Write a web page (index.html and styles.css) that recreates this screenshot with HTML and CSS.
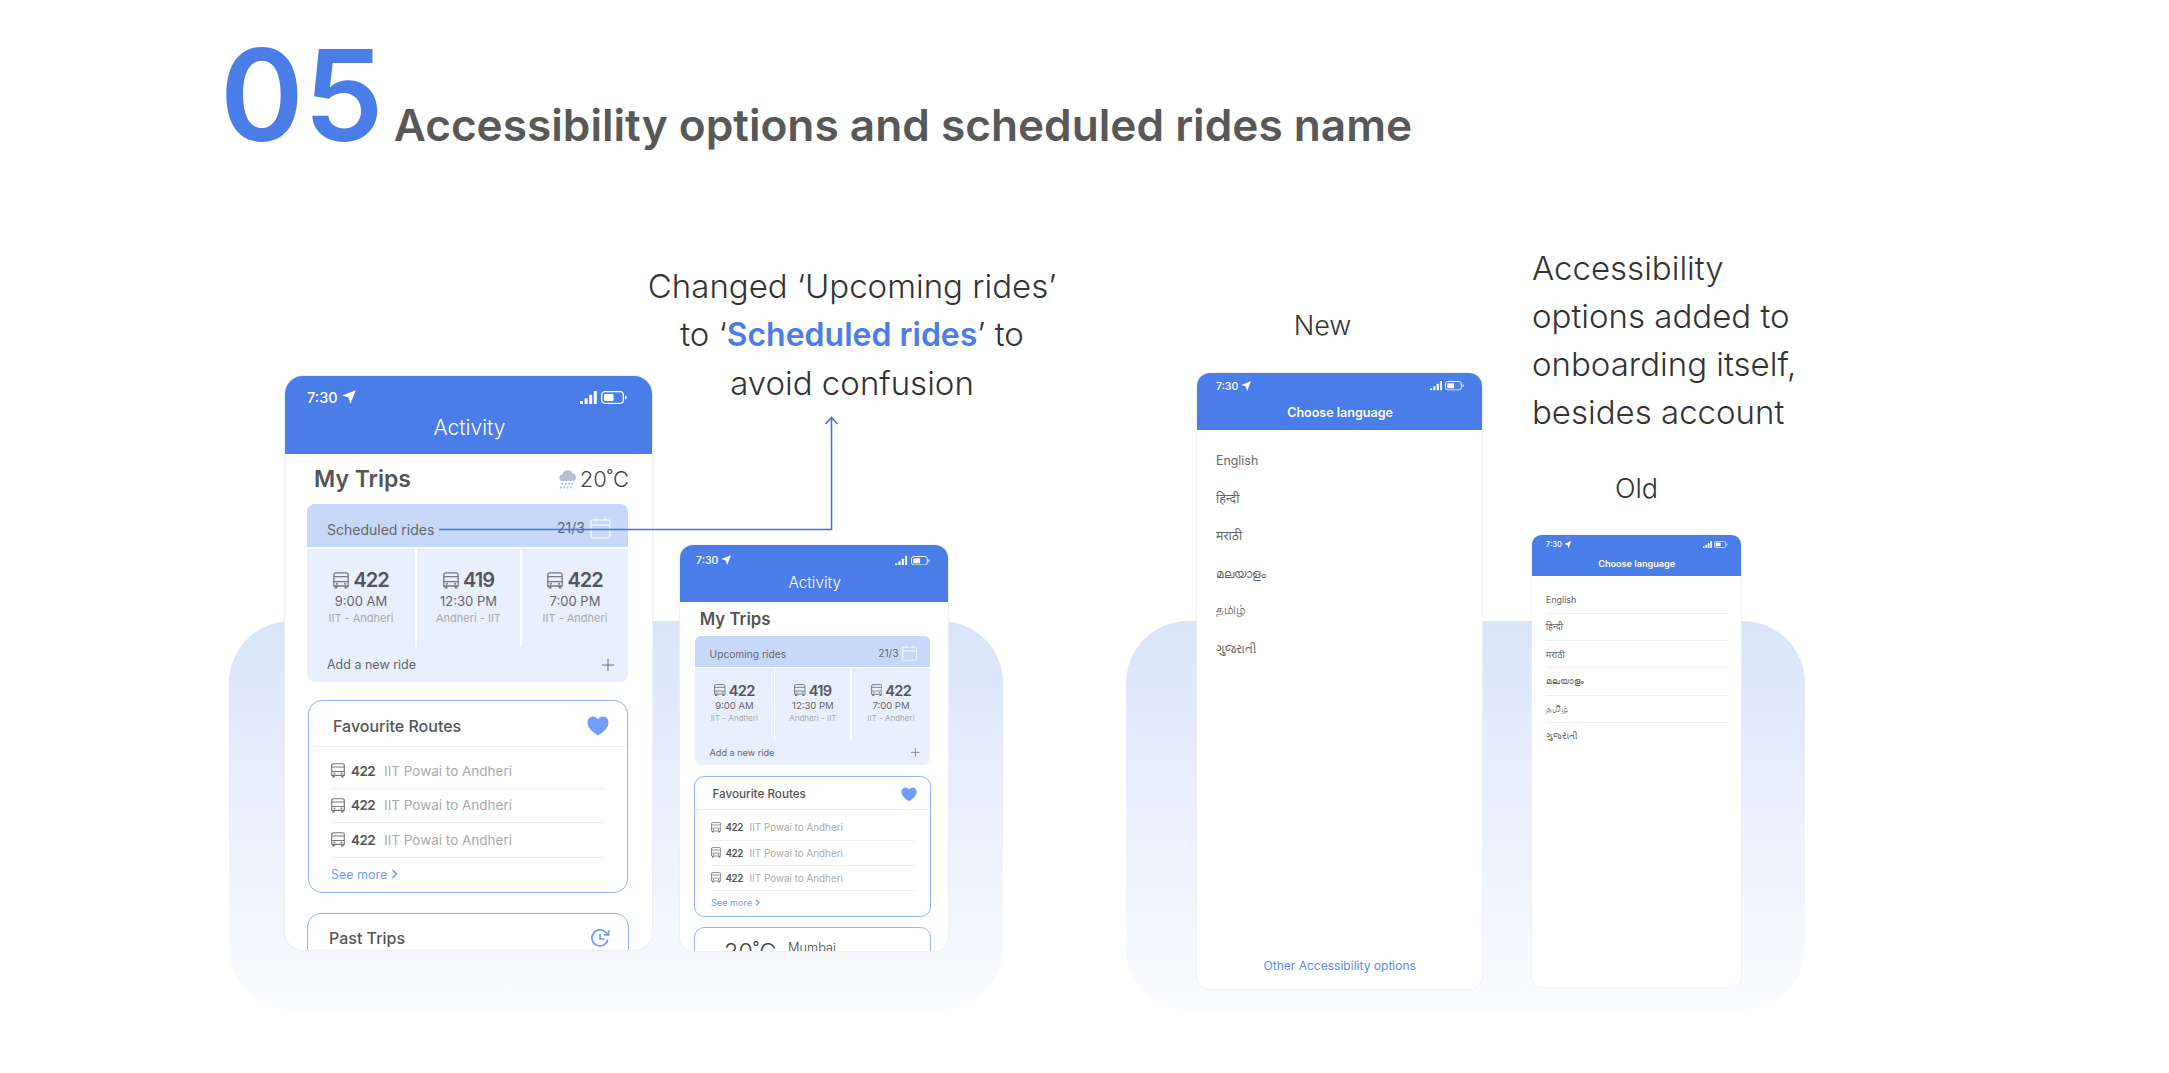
FILE: index.html
```html
<!DOCTYPE html>
<html lang="en">
<head>
    <meta charset="UTF-8">
    <meta name="viewport" content="width=device-width, initial-scale=1">
    <title>Accessibility options and scheduled rides name</title>
    <link rel="stylesheet" href="styles.css">
</head>
<body>
<svg class="iconDefs" width="0" height="0" aria-hidden="true">
    <symbol id="bus" viewBox="0 0 16 17">
        <path d="M2.8.8h10.4A2 2 0 0 1 15.2 2.8V14H.8V2.8A2 2 0 0 1 2.8.8Z" fill="none" stroke="currentColor" stroke-width="1.3"/>
        <path d="M.8 4.6h14.4M.8 9.6h14.4" fill="none" stroke="currentColor" stroke-width="1.2"/>
        <path d="M1.6 14h2.8v2.5H1.6zM11.6 14h2.8v2.5h-2.8z" fill="currentColor"/>
        <circle cx="4" cy="11.8" r="1" fill="currentColor"/>
        <circle cx="12" cy="11.8" r="1" fill="currentColor"/>
    </symbol>
    <symbol id="nav" viewBox="0 0 12 12">
        <path d="M11.8.2 7.2 11.8 5.6 6.4.2 4.8Z" fill="currentColor"/>
    </symbol>
    <symbol id="signal" viewBox="0 0 17 13">
        <rect x="0" y="10" width="3" height="3" rx=".6" fill="currentColor"/>
        <rect x="4.6" y="7.2" width="3" height="5.8" rx=".6" fill="currentColor"/>
        <rect x="9.2" y="3.8" width="3" height="9.2" rx=".6" fill="currentColor"/>
        <rect x="13.8" y="0" width="3" height="13" rx=".6" fill="currentColor"/>
    </symbol>
    <symbol id="battery" viewBox="0 0 26 13">
        <rect x=".7" y=".7" width="21.6" height="11.6" rx="3.2" fill="none" stroke="currentColor" stroke-width="1.3"/>
        <rect x="3" y="3" width="9.5" height="7" rx="1.2" fill="currentColor"/>
        <path d="M24 4.4c1.2.4 1.8 1.1 1.8 2.1S25.2 8.2 24 8.6Z" fill="currentColor"/>
    </symbol>
    <symbol id="heart" viewBox="0 0 22 20">
        <path d="M11 19.500C5 15.200.5 11.600.5 6.400.5 3 3 .6 6 .6c2 0 3.800 1 5 2.800C12.200 1.600 14 .6 16 .6c3 0 5.500 2.400 5.500 5.800 0 5.200-4.500 8.800-10.500 13.100Z" fill="currentColor"/>
    </symbol>
    <symbol id="calendar" viewBox="0 0 21 22">
        <rect x="1" y="3" width="19" height="18" rx="2" fill="none" stroke="currentColor" stroke-width="1.5"/>
        <path d="M1 8h19M6 .5v4M15 .5v4" fill="none" stroke="currentColor" stroke-width="1.5"/>
    </symbol>
    <symbol id="plus" viewBox="0 0 12 12">
        <path d="M6 0v12M0 6h12" fill="none" stroke="currentColor" stroke-width="1.1"/>
    </symbol>
    <symbol id="chevron" viewBox="0 0 7 10">
        <path d="M1.5 1 5.500 5l-4 4" fill="none" stroke="currentColor" stroke-width="1.6"/>
    </symbol>
    <symbol id="history" viewBox="0 0 20 20">
        <path d="M17.800 11.500A8 8 0 1 1 15.600 4.200L18 6.200" fill="none" stroke="currentColor" stroke-width="1.7"/>
        <path d="M18.800 2.200 18.400 7 13.800 6.600" fill="none" stroke="currentColor" stroke-width="1.7"/>
        <path d="M10 6v5h4.500" fill="none" stroke="currentColor" stroke-width="1.7"/>
    </symbol>
    <symbol id="rainCloud" viewBox="0 0 18 22">
        <path d="M4 13A3.200 3.200 0 0 1 3.300 6.600 5.500 5.500 0 0 1 13.600 5.400 3.900 3.900 0 0 1 14.400 13Z" fill="#b4c1d3"/>
        <path d="M3.600 14.800l-.7 2M7 14.800l-.7 2M10.400 14.800l-.7 2M13.800 14.800l-.7 2M2.200 18.600l-.7 2M5.600 18.600l-.7 2M9 18.600l-.7 2M12.400 18.600l-.7 2" fill="none" stroke="#7cc4f5" stroke-width="1.4"/>
    </symbol>
</svg>

<h1 class="pageTitle"><span class="titleNumber">05</span> Accessibility options and scheduled rides name</h1>

<div class="board">
    <div class="panel panelLeft"></div>
    <div class="panel panelRight"></div>

    <div class="column columnNew">
        <div class="phone phoneTrips">
            <div class="phoneHeader">
                <div class="statusBar">
                    <span class="clock">7:30 <svg class="navIcon"><use href="#nav"/></svg></span>
                    <span class="statusIcons"><svg class="signalIcon"><use href="#signal"/></svg><svg class="batteryIcon"><use href="#battery"/></svg></span>
                </div>
                <div class="headerTitle">Activity</div>
            </div>
            <div class="tripsRow">
                <span class="tripsTitle">My Trips</span>
                <span class="weather"><svg class="cloudIcon"><use href="#rainCloud"/></svg>20˚C</span>
            </div>
            <div class="ridesCard">
                <div class="ridesHead">
                    <span>Scheduled rides</span>
                    <span class="ridesDate">21/3 <svg class="calendarIcon"><use href="#calendar"/></svg></span>
                </div>
                <div class="ridesGrid">
                    <div class="ride">
                        <div class="rideNumber"><svg class="busIcon"><use href="#bus"/></svg>422</div>
                        <div class="rideTime">9:00 AM</div>
                        <div class="rideRoute">IIT - Andheri</div>
                    </div>
                    <div class="ride">
                        <div class="rideNumber"><svg class="busIcon"><use href="#bus"/></svg>419</div>
                        <div class="rideTime">12:30 PM</div>
                        <div class="rideRoute">Andheri - IIT</div>
                    </div>
                    <div class="ride">
                        <div class="rideNumber"><svg class="busIcon"><use href="#bus"/></svg>422</div>
                        <div class="rideTime">7:00 PM</div>
                        <div class="rideRoute">IIT - Andheri</div>
                    </div>
                </div>
                <div class="ridesFoot">
                    <span>Add a new ride</span>
                    <svg class="plusIcon"><use href="#plus"/></svg>
                </div>
            </div>
            <div class="routesCard">
                <div class="routesHead">
                    <span>Favourite Routes</span>
                    <svg class="heartIcon"><use href="#heart"/></svg>
                </div>
                <div class="routeList">
                    <div class="routeRow"><svg class="routeBus"><use href="#bus"/></svg><b>422</b><span>IIT Powai to Andheri</span></div>
                    <div class="routeRow"><svg class="routeBus"><use href="#bus"/></svg><b>422</b><span>IIT Powai to Andheri</span></div>
                    <div class="routeRow"><svg class="routeBus"><use href="#bus"/></svg><b>422</b><span>IIT Powai to Andheri</span></div>
                </div>
                <div class="seeMore">See more <svg class="chevronIcon"><use href="#chevron"/></svg></div>
            </div>
            <div class="nextCard">
                <div class="routesHead nextHead">
                    <span>Past Trips</span>
                    <svg class="historyIcon"><use href="#history"/></svg>
                </div>
            </div>
        </div>
    </div>

    <div class="column columnOld">
        <p class="caption captionRides">Changed ‘Upcoming rides’<br>to ‘<b>Scheduled rides</b>’ to<br>avoid confusion</p>
        <div class="phone phoneTrips phoneOld">
            <div class="phoneHeader">
                <div class="statusBar">
                    <span class="clock">7:30 <svg class="navIcon"><use href="#nav"/></svg></span>
                    <span class="statusIcons"><svg class="signalIcon"><use href="#signal"/></svg><svg class="batteryIcon"><use href="#battery"/></svg></span>
                </div>
                <div class="headerTitle">Activity</div>
            </div>
            <div class="tripsRow">
                <span class="tripsTitle">My Trips</span>
            </div>
            <div class="ridesCard">
                <div class="ridesHead">
                    <span>Upcoming rides</span>
                    <span class="ridesDate">21/3 <svg class="calendarIcon"><use href="#calendar"/></svg></span>
                </div>
                <div class="ridesGrid">
                    <div class="ride">
                        <div class="rideNumber"><svg class="busIcon"><use href="#bus"/></svg>422</div>
                        <div class="rideTime">9:00 AM</div>
                        <div class="rideRoute">IIT - Andheri</div>
                    </div>
                    <div class="ride">
                        <div class="rideNumber"><svg class="busIcon"><use href="#bus"/></svg>419</div>
                        <div class="rideTime">12:30 PM</div>
                        <div class="rideRoute">Andheri - IIT</div>
                    </div>
                    <div class="ride">
                        <div class="rideNumber"><svg class="busIcon"><use href="#bus"/></svg>422</div>
                        <div class="rideTime">7:00 PM</div>
                        <div class="rideRoute">IIT - Andheri</div>
                    </div>
                </div>
                <div class="ridesFoot">
                    <span>Add a new ride</span>
                    <svg class="plusIcon"><use href="#plus"/></svg>
                </div>
            </div>
            <div class="routesCard">
                <div class="routesHead">
                    <span>Favourite Routes</span>
                    <svg class="heartIcon"><use href="#heart"/></svg>
                </div>
                <div class="routeList">
                    <div class="routeRow"><svg class="routeBus"><use href="#bus"/></svg><b>422</b><span>IIT Powai to Andheri</span></div>
                    <div class="routeRow"><svg class="routeBus"><use href="#bus"/></svg><b>422</b><span>IIT Powai to Andheri</span></div>
                    <div class="routeRow"><svg class="routeBus"><use href="#bus"/></svg><b>422</b><span>IIT Powai to Andheri</span></div>
                </div>
                <div class="seeMore">See more <svg class="chevronIcon"><use href="#chevron"/></svg></div>
            </div>
            <div class="nextCard">
                <div class="weatherHead">
                    <span class="bigTemp">20˚C</span>
                    <span class="cityName">Mumbai</span>
                </div>
            </div>
        </div>
    </div>

    <div class="column columnLang">
        <p class="caption captionSmall captionNew">New</p>
        <div class="phone phoneLang">
            <div class="phoneHeader">
                <div class="statusBar">
                    <span class="clock">7:30 <svg class="navIcon"><use href="#nav"/></svg></span>
                    <span class="statusIcons"><svg class="signalIcon"><use href="#signal"/></svg><svg class="batteryIcon"><use href="#battery"/></svg></span>
                </div>
                <div class="headerTitle headerBold">Choose language</div>
            </div>
            <ul class="langList">
                <li>English</li>
                <li lang="hi">हिन्दी</li>
                <li lang="mr">मराठी</li>
                <li lang="ml">മലയാളം</li>
                <li lang="ta">தமிழ்</li>
                <li lang="gu">ગુજરાતી</li>
            </ul>
            <div class="otherOptions">Other Accessibility options</div>
        </div>
    </div>

    <div class="column columnLangOld">
        <p class="caption captionAccess">Accessibility<br>options added to<br>onboarding itself,<br>besides account</p>
        <p class="caption captionSmall captionOld">Old</p>
        <div class="phone phoneLang phoneLangOld">
            <div class="phoneHeader">
                <div class="statusBar">
                    <span class="clock">7:30 <svg class="navIcon"><use href="#nav"/></svg></span>
                    <span class="statusIcons"><svg class="signalIcon"><use href="#signal"/></svg><svg class="batteryIcon"><use href="#battery"/></svg></span>
                </div>
                <div class="headerTitle headerBold">Choose language</div>
            </div>
            <ul class="langList">
                <li>English</li>
                <li lang="hi">हिन्दी</li>
                <li lang="mr">मराठी</li>
                <li lang="ml">മലയാളം</li>
                <li lang="ta">தமிழ்</li>
                <li lang="gu">ગુજરાતી</li>
            </ul>
        </div>
    </div>

    <svg class="connector" width="400" height="120" viewBox="0 0 400 120">
        <path d="M0 113.500H392.500V2" fill="none" stroke="#3f74e6" stroke-width="1.6"/>
        <path d="M386.500 8 392.500 1.500 398.500 8" fill="none" stroke="#3f74e6" stroke-width="1.6"/>
    </svg>
</div>
</body>
</html>
```

FILE: styles.css
```css
:root {
    --blue: #4a7de8;
    --line-blue: #8fb2fb;
    --soft-blue: #6f9dfb;
    --text-dark: #555;
    --text-mid: #666;
    --text-light: #aaa;
    --font-primary: Inter, "Noto Sans", sans-serif;
}

* {
    box-sizing: border-box;
}

body {
    background: #fff;
    font-family: var(--font-primary);
    height: 1073px;
    margin: 0;
    overflow: hidden;
    width: 2169px;
}

.iconDefs {
    position: absolute;
}

.pageTitle {
    align-items: baseline;
    color: #585858;
    display: flex;
    font-size: 44.2px;
    font-weight: 600;
    gap: 10px;
    height: 244px;
    margin: 0;
    padding: 10px 0 0 220px;
}

.titleNumber {
    color: var(--blue);
    font-size: 127px;
    font-weight: 600;
    line-height: 170px;
}

.board {
    display: flex;
    padding-left: 285px;
    position: relative;
}

.panel {
    background: linear-gradient(#d9e4fa, #fbfcff);
    border-radius: 62px;
    height: 389px;
    position: absolute;
    top: 377px;
    z-index: -1;
}

.panelLeft {
    left: 229px;
    width: 774px;
}

.panelRight {
    left: 1126px;
    width: 679px;
}

.column {
    display: flex;
    flex-direction: column;
}

.columnNew {
    padding-top: 132px;
    width: 367px;
}

.columnOld {
    margin-left: 28px;
    padding-top: 18px;
    width: 268px;
}

.columnLang {
    margin-left: 249px;
    width: 285px;
}

.columnLangOld {
    margin-left: 50px;
    width: 209px;
}

.caption {
    color: #333;
    font-size: 33px;
    font-weight: 300;
    line-height: 48px;
    margin: 0;
    white-space: nowrap;
}

.caption b {
    color: var(--blue);
    font-size: 32px;
    font-weight: 600;
}

.captionSmall {
    font-size: 27px;
}

.captionRides {
    margin: 0 0 138px -33px;
    text-align: center;
    width: 410px;
}

.captionNew {
    margin: 58px 0 23px;
    padding-right: 34px;
    text-align: center;
}

.captionAccess {
    margin-bottom: 29px;
}

.captionOld {
    margin-bottom: 22px;
    text-align: center;
}

/* phones */
.phone {
    background: #fff;
    border-radius: 18px;
    box-shadow: 0 0 0 1px #eceef3;
    height: 574px;
    overflow: hidden;
    width: 367px;
}

.phoneOld {
    height: 556px;
    zoom: 0.73;
}

.phoneLang {
    display: flex;
    flex-direction: column;
    height: 844px;
    width: 391px;
    zoom: 0.73;
}

.phoneLangOld {
    height: 853px;
    width: 394px;
    zoom: 0.53;
}

.phoneHeader {
    background: var(--blue);
    color: #fff;
    flex: none;
    height: 78px;
    padding: 12px 25px 0 22px;
}

.phoneLang .phoneHeader {
    padding: 9px 25px 0 26px;
}

.statusBar {
    align-items: center;
    display: flex;
    font-size: 14.5px;
    font-weight: 500;
    height: 18px;
    justify-content: space-between;
}

.clock {
    align-items: center;
    display: flex;
    gap: 4px;
}

.statusIcons {
    align-items: center;
    display: flex;
    gap: 4px;
}

.navIcon {
    height: 14px;
    width: 14px;
}

.signalIcon {
    height: 13px;
    width: 17px;
}

.batteryIcon {
    height: 13px;
    width: 26px;
}

.headerTitle {
    font-size: 21px;
    font-weight: 300;
    line-height: 30px;
    margin-top: 7px;
    padding-left: 5px;
    text-align: center;
}

.headerBold {
    font-size: 17.2px;
    font-weight: 600;
    margin-top: 13px;
    padding-left: 0;
}

/* my trips */
.tripsRow {
    align-items: center;
    display: flex;
    height: 50px;
    justify-content: space-between;
    padding: 0 23px 0 29px;
}

.phoneOld .tripsRow {
    height: 46px;
    padding-left: 27px;
}

.tripsTitle {
    color: var(--text-dark);
    font-size: 23px;
    font-weight: 600;
}

.weather {
    align-items: center;
    color: #444;
    display: flex;
    font-size: 22px;
    font-weight: 300;
    gap: 3px;
}

.cloudIcon {
    height: 22px;
    width: 18px;
}

.ridesCard {
    background: #e8effe;
    border-radius: 8px;
    margin-left: 22px;
    overflow: hidden;
    width: 321px;
}

.phoneOld .ridesCard {
    margin-left: 20.5px;
    width: 322px;
}

.ridesHead {
    align-items: center;
    background: #c6d9fb;
    color: var(--text-mid);
    display: flex;
    font-size: 14px;
    height: 43px;
    justify-content: space-between;
    padding: 8px 17px 0 20px;
}

.ridesDate {
    align-items: center;
    display: flex;
    gap: 5px;
    margin-top: -4px;
}

.calendarIcon {
    color: #f0f5ff;
    height: 22px;
    width: 21px;
}

.ridesGrid {
    background: #fff;
    border-top: 2px solid #fff;
    display: grid;
    gap: 2px;
    grid-template-columns: 108px 103px 1fr;
    height: 100px;
}

.ride {
    background: #e8effe;
    padding-top: 19px;
    text-align: center;
}

.rideNumber {
    align-items: center;
    color: var(--text-dark);
    display: flex;
    font-size: 20px;
    font-weight: 600;
    gap: 4px;
    height: 24px;
    justify-content: center;
    letter-spacing: -1px;
}

.busIcon {
    color: #777;
    height: 17px;
    width: 16px;
}

.rideTime {
    color: var(--text-mid);
    font-size: 13px;
    line-height: 19px;
}

.rideRoute {
    color: var(--text-light);
    font-size: 11px;
    line-height: 15px;
}

.ridesFoot {
    align-items: center;
    border-top: 2px solid #fff;
    color: var(--text-mid);
    display: flex;
    font-size: 12.5px;
    height: 37px;
    justify-content: space-between;
    margin: -2px 5px 0 8px;
    padding: 0 9px 0 12px;
}

.plusIcon {
    color: #777;
    height: 12px;
    width: 12px;
}

/* favourite routes */
.routesCard {
    border: 1.5px solid var(--line-blue);
    border-radius: 14px;
    height: 193px;
    margin: 18px 0 0 23px;
    width: 320px;
}

.phoneOld .routesCard {
    margin: 14px 0 0 19px;
    width: 325px;
}

.routesHead {
    align-items: center;
    border-bottom: 1px solid #eceef1;
    color: var(--text-dark);
    display: flex;
    font-size: 16px;
    font-weight: 500;
    height: 46px;
    justify-content: space-between;
    padding: 4px 18px 0 24px;
}

.heartIcon {
    color: var(--soft-blue);
    height: 20px;
    width: 22px;
}

.routeList {
    padding: 7px 22px 0 22px;
}

.routeRow {
    align-items: center;
    border-bottom: 1px solid #eceef1;
    color: var(--text-light);
    display: flex;
    font-size: 13.5px;
    gap: 6px;
    height: 34.5px;
}

.routeRow b {
    color: var(--text-dark);
    font-weight: 600;
    letter-spacing: -0.6px;
    margin-right: 3px;
}

.routeBus {
    color: #777;
    height: 15px;
    width: 14px;
}

.seeMore {
    align-items: center;
    color: var(--soft-blue);
    display: flex;
    font-size: 12.5px;
    gap: 4px;
    margin-top: 9px;
    padding-left: 22px;
}

.chevronIcon {
    height: 10px;
    width: 7px;
}

.nextCard {
    border: 1.5px solid var(--line-blue);
    border-radius: 14px;
    height: 80px;
    margin: 20px 0 0 22px;
    width: 322px;
}

.phoneOld .nextCard {
    margin: 15px 0 0 19px;
    width: 325px;
}

.nextHead {
    border-bottom: 0;
    font-weight: 500;
    padding: 1px 18px 0 21px;
}

.historyIcon {
    color: var(--soft-blue);
    height: 20px;
    width: 20px;
}

.weatherHead {
    align-items: flex-start;
    color: #444;
    display: flex;
    gap: 16px;
    padding: 12px 0 0 40px;
}

.bigTemp {
    font-size: 32px;
    font-weight: 300;
}

.cityName {
    font-size: 17.5px;
    font-weight: 300;
    margin-top: 3.5px;
}

/* language lists */
.langList {
    color: #666;
    flex: 1;
    font-family: Inter, "Noto Sans", "DejaVu Sans", sans-serif;
    font-size: 17px;
    list-style: none;
    margin: 0;
    padding: 16px 25px 0 26px;
}

.phoneLangOld .langList {
    padding-top: 19px;
}

.langList li {
    align-items: center;
    display: flex;
    height: 51.5px;
}

.phoneLangOld .langList li {
    border-bottom: 2px solid #eee;
}

.phoneLangOld .langList li:last-child {
    border-bottom: 0;
}

.otherOptions {
    color: #5b8bf0;
    flex: none;
    font-size: 16.5px;
    height: 42px;
    text-align: center;
}

/* arrow from the renamed label up to its note */
.connector {
    left: 439px;
    position: absolute;
    top: 172px;
}
```
